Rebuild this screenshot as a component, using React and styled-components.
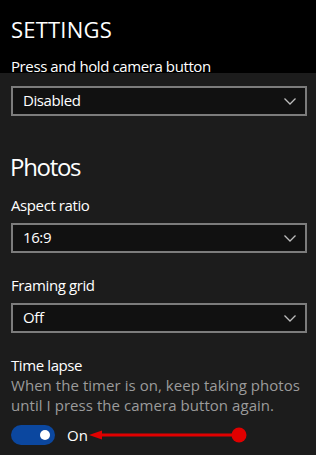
import React from 'react';
import styled, { createGlobalStyle } from 'styled-components';

const GlobalStyle = createGlobalStyle`
    html, body {
        margin: 0;
        padding: 0;
        background: #1c1c1c;
    }
    body {
        font-family: "Open Sans", "Noto Sans", sans-serif;
        color: #fff;
    }
`;

const Page = styled.div`
    width: 316px;
    height: 455px;
    overflow: hidden;
    background: #1c1c1c;
`;

const Header = styled.div`
    height: 73px;
    box-sizing: border-box;
    padding: 14px 9px 0 11px;
    background: #000;
`;

const Title = styled.h1`
    margin: 0;
    font-size: 22px;
    line-height: 30px;
    font-weight: 400;
    letter-spacing: 0.2px;
`;

const Panel = styled.div`
    padding: 0 9px 0 11px;
    display: flex;
    flex-direction: column;
`;

const SectionTitle = styled.h2`
    margin: 35px 0 0 -1px;
    font-size: 24px;
    line-height: 32px;
    font-weight: 400;
    letter-spacing: -1.3px;
`;

const Label = styled.div`
    margin-top: ${(p) => p.$top || 0}px;
    font-size: 15px;
    line-height: 20px;
    letter-spacing: ${(p) => (p.$muted ? '0.05px' : '-0.4px')};
    color: ${(p) => (p.$muted ? '#9b9b9b' : '#fff')};
`;

const Select = styled.div`
    margin-top: ${(p) => p.$top || 0}px;
    height: 30px;
    box-sizing: border-box;
    border: 2px solid #7c7c7c;
    background: #111;
    display: flex;
    align-items: center;
    justify-content: space-between;
    padding: 0 9px 3px 10px;
    font-size: 15px;
    letter-spacing: -0.4px;
`;

const Chevron = () => (
    <svg width="12" height="7" viewBox="0 0 12 7" style={{ marginTop: 3 }}>
        <path d="M0.5 0.5 L6 6 L11.5 0.5" fill="none" stroke="#bdbdbd" strokeWidth="1.3" />
    </svg>
);

const ToggleRow = styled.div`
    margin-top: 10px;
    height: 20px;
    display: flex;
    align-items: center;
    gap: 12px;
`;

const Toggle = styled.div`
    width: 44px;
    height: 20px;
    border-radius: 10px;
    background: #0b479f;
    position: relative;
    flex: none;

    &::after {
        content: '';
        position: absolute;
        right: 5px;
        top: 5px;
        width: 10px;
        height: 10px;
        border-radius: 50%;
        background: #fff;
    }
`;

const ToggleText = styled.span`
    font-size: 15px;
    line-height: 20px;
`;

const Arrow = styled.svg`
    margin-left: -12px;
    flex: none;
`;

function Dropdown({ value, top }) {
    return (
        <Select $top={top}>
            <span>{value}</span>
            <Chevron />
        </Select>
    );
}

export default function App() {
    return (
        <Page>
            <GlobalStyle />
            <Header>
                <Title>SETTINGS</Title>
                <Label $top={12}>Press and hold camera button</Label>
            </Header>
            <Panel>
                <Dropdown value="Disabled" top={13} />

                <SectionTitle>Photos</SectionTitle>
                <Label $top={12}>Aspect ratio</Label>
                <Dropdown value="16:9" top={8} />

                <Label $top={22}>Framing grid</Label>
                <Dropdown value="Off" top={8} />

                <Label $top={22}>Time lapse</Label>
                <Label $muted>
                    When the timer is on, keep taking photos
                    <br />
                    until I press the camera button again.
                </Label>
                <ToggleRow>
                    <Toggle />
                    <ToggleText>On</ToggleText>
                    {/* red annotation arrow */}
                    <Arrow width="160" height="20" viewBox="0 0 160 20">
                        <line x1="10" y1="10" x2="150" y2="10" stroke="#e00000" strokeWidth="3" />
                        <polygon points="1,10 14,5.5 14,14.5" fill="#e00000" />
                        <circle cx="151" cy="10" r="7.5" fill="#e00000" />
                    </Arrow>
                </ToggleRow>
            </Panel>
        </Page>
    );
}
